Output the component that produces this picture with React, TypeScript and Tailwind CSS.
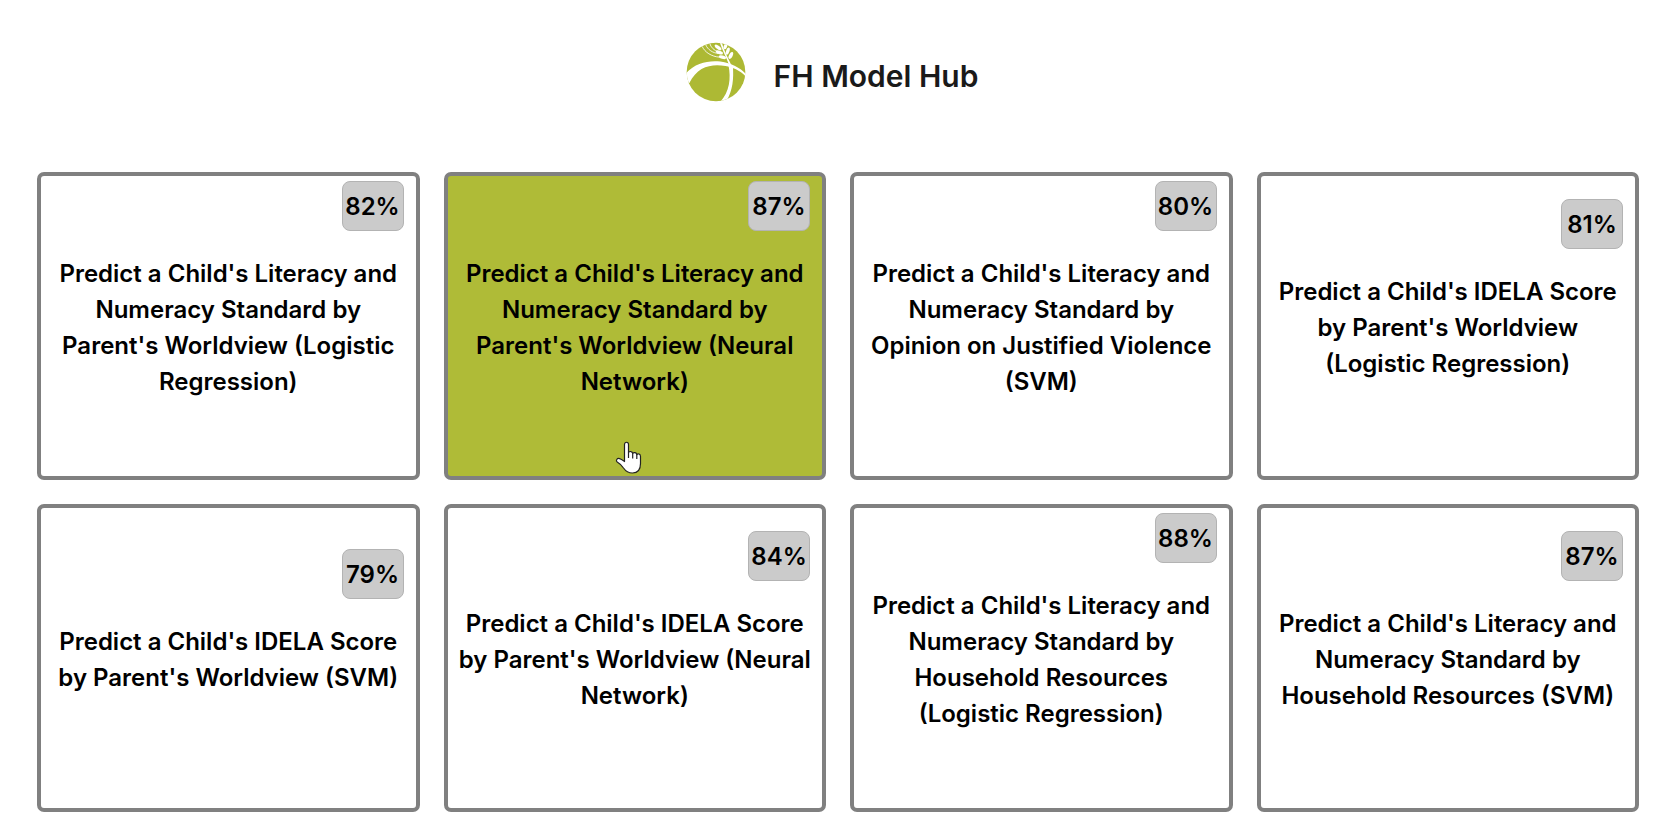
type Model = { title: string; score: number; active?: boolean };

const models: Model[] = [
  { title: "Predict a Child's Literacy and Numeracy Standard by Parent's Worldview (Logistic Regression)", score: 82 },
  { title: "Predict a Child's Literacy and Numeracy Standard by Parent's Worldview (Neural Network)", score: 87, active: true },
  { title: "Predict a Child's Literacy and Numeracy Standard by Opinion on Justified Violence (SVM)", score: 80 },
  { title: "Predict a Child's IDELA Score by Parent's Worldview (Logistic Regression)", score: 81 },
  { title: "Predict a Child's IDELA Score by Parent's Worldview (SVM)", score: 79 },
  { title: "Predict a Child's IDELA Score by Parent's Worldview (Neural Network)", score: 84 },
  { title: "Predict a Child's Literacy and Numeracy Standard by Household Resources (Logistic Regression)", score: 88 },
  { title: "Predict a Child's Literacy and Numeracy Standard by Household Resources (SVM)", score: 87 },
];

function Logo() {
  return (
    <svg className="size-15 shrink-0" viewBox="48 37 178 178" aria-hidden="true">
      <clipPath id="globe">
        <circle cx="137" cy="126" r="87" />
      </clipPath>
      <g clipPath="url(#globe)">
        <rect x="48" y="37" width="178" height="178" fill="#adb934" />
        <g fill="#fff">
          <path d="M44 134 C72 100 112 91 150 95 C184 99 210 115 228 134 L228 142 C208 120 187 112 165 108 C125 101 82 108 58 159 L44 168 Z" />
          <path d="M174 106 L187 108 C190 145 187 180 168 212 L150 214 C177 185 182 145 174 106 Z" />
          <path d="M154 38 C160 62 172 84 184 108 L176 106 C168 84 156 62 148 38 Z" />
          <ellipse cx="143" cy="53" rx="12" ry="5" transform="rotate(38 143 53)" />
          <ellipse cx="147" cy="68" rx="11" ry="5" transform="rotate(20 147 68)" />
          <ellipse cx="156" cy="82" rx="11" ry="5" transform="rotate(16 156 82)" />
          <ellipse cx="165" cy="50" rx="9" ry="5" transform="rotate(-70 165 50)" />
          <ellipse cx="172" cy="64" rx="11" ry="5" transform="rotate(-72 172 64)" />
          <ellipse cx="181" cy="77" rx="11" ry="5.5" transform="rotate(-65 181 77)" />
        </g>
        <g fill="none" stroke="#fff" strokeWidth="2.5">
          <path d="M118 40 C122 54 132 62 143 66" />
          <path d="M106 44 C112 60 128 70 145 71" />
          <path d="M96 50 C104 68 124 80 147 82" />
        </g>
      </g>
    </svg>
  );
}

function HandPointer() {
  return (
    <svg
      className="pointer-events-none absolute bottom-0 left-1/2 h-9 w-7 -translate-x-[21px]"
      viewBox="0 0 28 36"
      aria-hidden="true"
    >
      <path
        d="M10.5 21.5 V4.5 C10.5 1.5 14.5 1.5 14.5 4.5 V12.5 C15.5 11 18.5 11.2 18.7 13.4 C19.8 12 22.6 12.4 22.8 14.6 C24 13.2 26.5 13.8 26.5 16.4 V23.5 C26.5 29.5 23.5 33 18.5 33 C14 33 11.5 31 9.5 28 C8 25.5 5.5 23.4 3.2 22 C1.4 20.6 3 17.8 5.6 18.6 C7.6 19.2 9 20.4 10.5 21.5 Z"
        fill="#fff"
        stroke="#222"
        strokeWidth="1.2"
        strokeLinejoin="round"
      />
      <path d="M14.5 12.5 V18 M18.7 13.4 V18.5 M22.8 14.6 V19" stroke="#222" strokeWidth="1.2" fill="none" />
    </svg>
  );
}

function ModelCard({ title, score, active }: Model) {
  return (
    <button
      type="button"
      className={`relative flex h-77 cursor-pointer flex-col justify-center rounded-[7px] border-4 border-[#808080] px-2 pb-[71px] text-center text-2xl leading-9 font-semibold text-black ${
        active ? "bg-[#afbb37]" : "bg-white"
      }`}
    >
      <span className="mr-1 mb-[25px] flex h-[50px] w-[62px] items-center justify-center self-end rounded-lg border border-[#b3b3b3] bg-[#cbcbcb] pt-0.5">
        {score}%
      </span>
      <span className="self-stretch">{title}</span>
      {active && <HandPointer />}
    </button>
  );
}

export default function App() {
  return (
    <div className="min-h-screen bg-white pb-2.5 font-['Century_Gothic','Inter',sans-serif]">
      <header className="flex items-end justify-center gap-7 pt-[42px] pb-[70px] pl-0.5">
        <Logo />
        <h1 className="text-3xl leading-13 font-semibold text-[#1a1a1a]">FH Model Hub</h1>
      </header>
      <main className="grid grid-cols-4 gap-6 pr-[23px] pl-[37px]">
        {models.map((model) => (
          <ModelCard key={model.title} {...model} />
        ))}
      </main>
    </div>
  );
}
